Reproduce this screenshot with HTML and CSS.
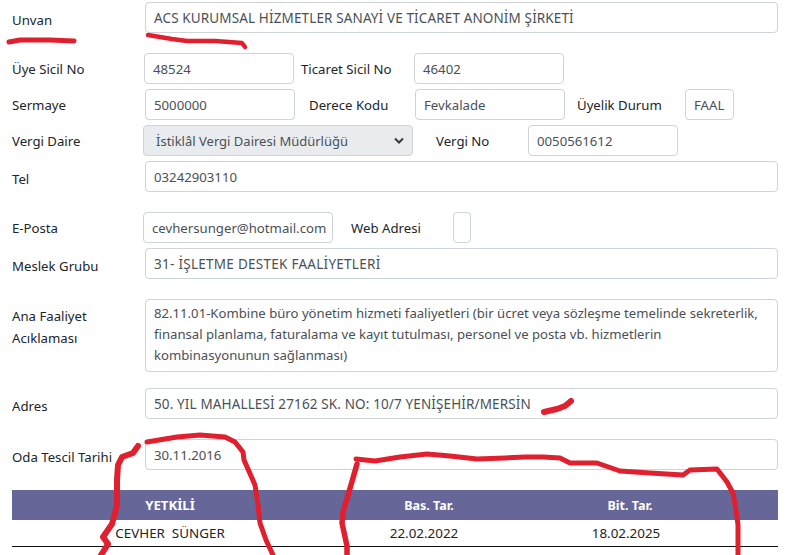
FILE: index.html
```html
<!DOCTYPE html>
<html lang="tr">
<head>
<meta charset="utf-8">
<title>Firma Bilgileri</title>
<link rel="stylesheet" href="styles.css">
</head>
<body>
<main class="form">
  <div class="row r-unvan"><span class="label l-133 low">Unvan</span><div class="field grow caps">ACS KURUMSAL HİZMETLER SANAYİ VE TİCARET ANONİM ŞİRKETİ</div></div>
  <div class="row r-uye"><span class="label l-132">Üye Sicil No</span><div class="field w-150">48524</div><span class="label l-120 gap-7">Ticaret Sicil No</span><div class="field w-150">46402</div></div>
  <div class="row r-std"><span class="label l-133">Sermaye</span><div class="field w-150">5000000</div><span class="label l-106 gap-14">Derece Kodu</span><div class="field w-150">Fevkalade</div><span class="label l-108 gap-12">Üyelik Durum</span><div class="field w-49">FAAL</div></div>
  <div class="row r-std"><span class="label l-131">Vergi Daire</span><div class="field select w-270">İstiklâl Vergi Dairesi Müdürlüğü<svg class="chevron" viewBox="0 0 10 7" aria-hidden="true"><path d="M1 1.5l4 4 4-4" fill="none" stroke="#343a40" stroke-width="2"/></svg></div><span class="label l-92 gap-23">Vergi No</span><div class="field w-150">0050561612</div></div>
  <div class="row r-std"><span class="label l-133 low">Tel</span><div class="field grow">03242903110</div></div>
  <div class="row r-wide"><span class="label l-131">E-Posta</span><div class="field w-190">cevhersunger@hotmail.com</div><span class="label l-102 gap-18">Web Adresi</span><div class="field w-18"></div></div>
  <div class="row r-std"><span class="label l-133 low">Meslek Grubu</span><div class="field grow caps-wide">31- İŞLETME DESTEK FAALİYETLERİ</div></div>
  <div class="row r-wide r-ana"><span class="label l-133 label-ana">Ana Faaliyet<br>Acıklaması</span><div class="field grow area">82.11.01-Kombine büro yönetim hizmeti faaliyetleri (bir ücret veya sözleşme temelinde sekreterlik, finansal planlama, faturalama ve kayıt tutulması, personel ve posta vb. hizmetlerin kombinasyonunun sağlanması)</div></div>
  <div class="row r-adres"><span class="label l-133 low">Adres</span><div class="field grow caps">50. YIL MAHALLESİ 27162 SK. NO: 10/7 YENİŞEHİR/MERSİN</div></div>
  <div class="row r-wide"><span class="label l-133 low">Oda Tescil Tarihi</span><div class="field grow">30.11.2016</div></div>
  <div class="table">
    <div class="thead"><span>YETKİLİ</span><span class="th-narrow">Bas. Tar.</span><span class="th-narrow">Bit. Tar.</span></div>
    <div class="tbody"><span>CEVHER&nbsp; SÜNGER</span><span>22.02.2022</span><span>18.02.2025</span></div>
  </div>
</main>
<svg class="marks" viewBox="0 0 792 555" aria-hidden="true">
  <g fill="none" stroke="#e0202e" stroke-linecap="round" stroke-linejoin="round">
    <path stroke-width="5" d="M9 42L20 40L50 40L74 41"/>
    <path stroke-width="4.5" d="M148 35L160 37L172 39L187 41L215 41L242 43L245 47"/>
    <path stroke-width="6" d="M544 412L557 409L565 406L571 401"/>
    <path stroke-width="6" d="M101 555L108 544L103 537L112 524L117 505L117 480L118 465L122 457L133 453L138 446"/>
    <path stroke-width="5" d="M147 442L165 439L177 437L200 435L225 437L235 442L243 452L244 460L255 485L258 505L260 523L266 540L273 555"/>
    <path stroke-width="5.5" d="M347 555L347 546L342 523L343 512L351 485L357 464"/>
    <path stroke-width="5" d="M356 459L375 461L400 457L427 454L450 456L477 459L505 458L525 457L543 457L560 458L570 463L597 463L620 471L650 473L683 475L690 470L717 469L727 482L733 493L736 510L738 525L738 555"/>
  </g>
</svg>
</body>
</html>
```
FILE: styles.css
```css
* { box-sizing: border-box; }
html, body { margin: 0; padding: 0; }
body {
  width: 792px;
  height: 555px;
  overflow: hidden;
  position: relative;
  background: #fff;
  font-family: "Noto Sans", sans-serif;
  font-size: 13.2px;
  color: #212529;
}
.form { padding: 2px 14px 0 12px; }
.row { display: flex; align-items: center; }
.r-uye { margin-top: 20px; }
.r-std { margin-top: 5px; }
.r-wide { margin-top: 20px; }
.r-adres { margin-top: 16px; }
.label { flex: none; white-space: nowrap; }
.low { padding-top: 4px; }
.l-92 { width: 92px; }
.l-102 { width: 102px; }
.l-106 { width: 106px; }
.l-108 { width: 108px; }
.l-120 { width: 113px; }
.l-131 { width: 131px; }
.l-132 { width: 132px; }
.l-133 { width: 133px; }
.gap-7 { margin-left: 7px; }
.gap-12 { margin-left: 12px; }
.gap-14 { margin-left: 14px; }
.gap-18 { margin-left: 18px; }
.gap-23 { margin-left: 23px; }
.label-ana { line-height: 22px; align-self: flex-start; padding-top: 6px; }
.field {
  height: 31px;
  flex: none;
  padding: 0 8px;
  display: flex;
  align-items: center;
  white-space: nowrap;
  color: #495057;
  background: #fff;
  border: 1px solid #ced4da;
  border-radius: 4px;
}
.grow { flex: 1; }
.caps { font-size: 13.5px; letter-spacing: 0.13px; }
.caps-wide { font-size: 13.5px; letter-spacing: 0.27px; }
.w-18 { width: 18px; }
.w-49 { width: 49px; }
.w-150 { width: 150px; }
.w-190 { width: 190px; }
.w-270 { width: 270px; padding: 0 8px 0 12px; justify-content: space-between; background: #e9ecef; font-size: 13px; }
.chevron { width: 10px; height: 7px; flex: none; }
.area {
  height: 73px;
  display: block;
  padding: 3px 8px;
  font-size: 13.15px;
  line-height: 21px;
  white-space: normal;
}
.table { margin-top: 20px; }
.thead, .tbody {
  display: grid;
  text-align: center;
  align-items: center;
}
.thead {
  grid-template-columns: 316px 202px 200px 1fr;
  height: 30px;
  background: #666699;
  color: #fff;
  font-weight: 700;
}
.th-narrow { font-size: 12.5px; }
.tbody {
  grid-template-columns: 316px 192px 212px 1fr;
  height: 27px;
  font-size: 13.4px;
  border-bottom: 1px solid #111;
}
.marks { position: absolute; left: 0; top: 0; width: 792px; height: 555px; pointer-events: none; }
```
